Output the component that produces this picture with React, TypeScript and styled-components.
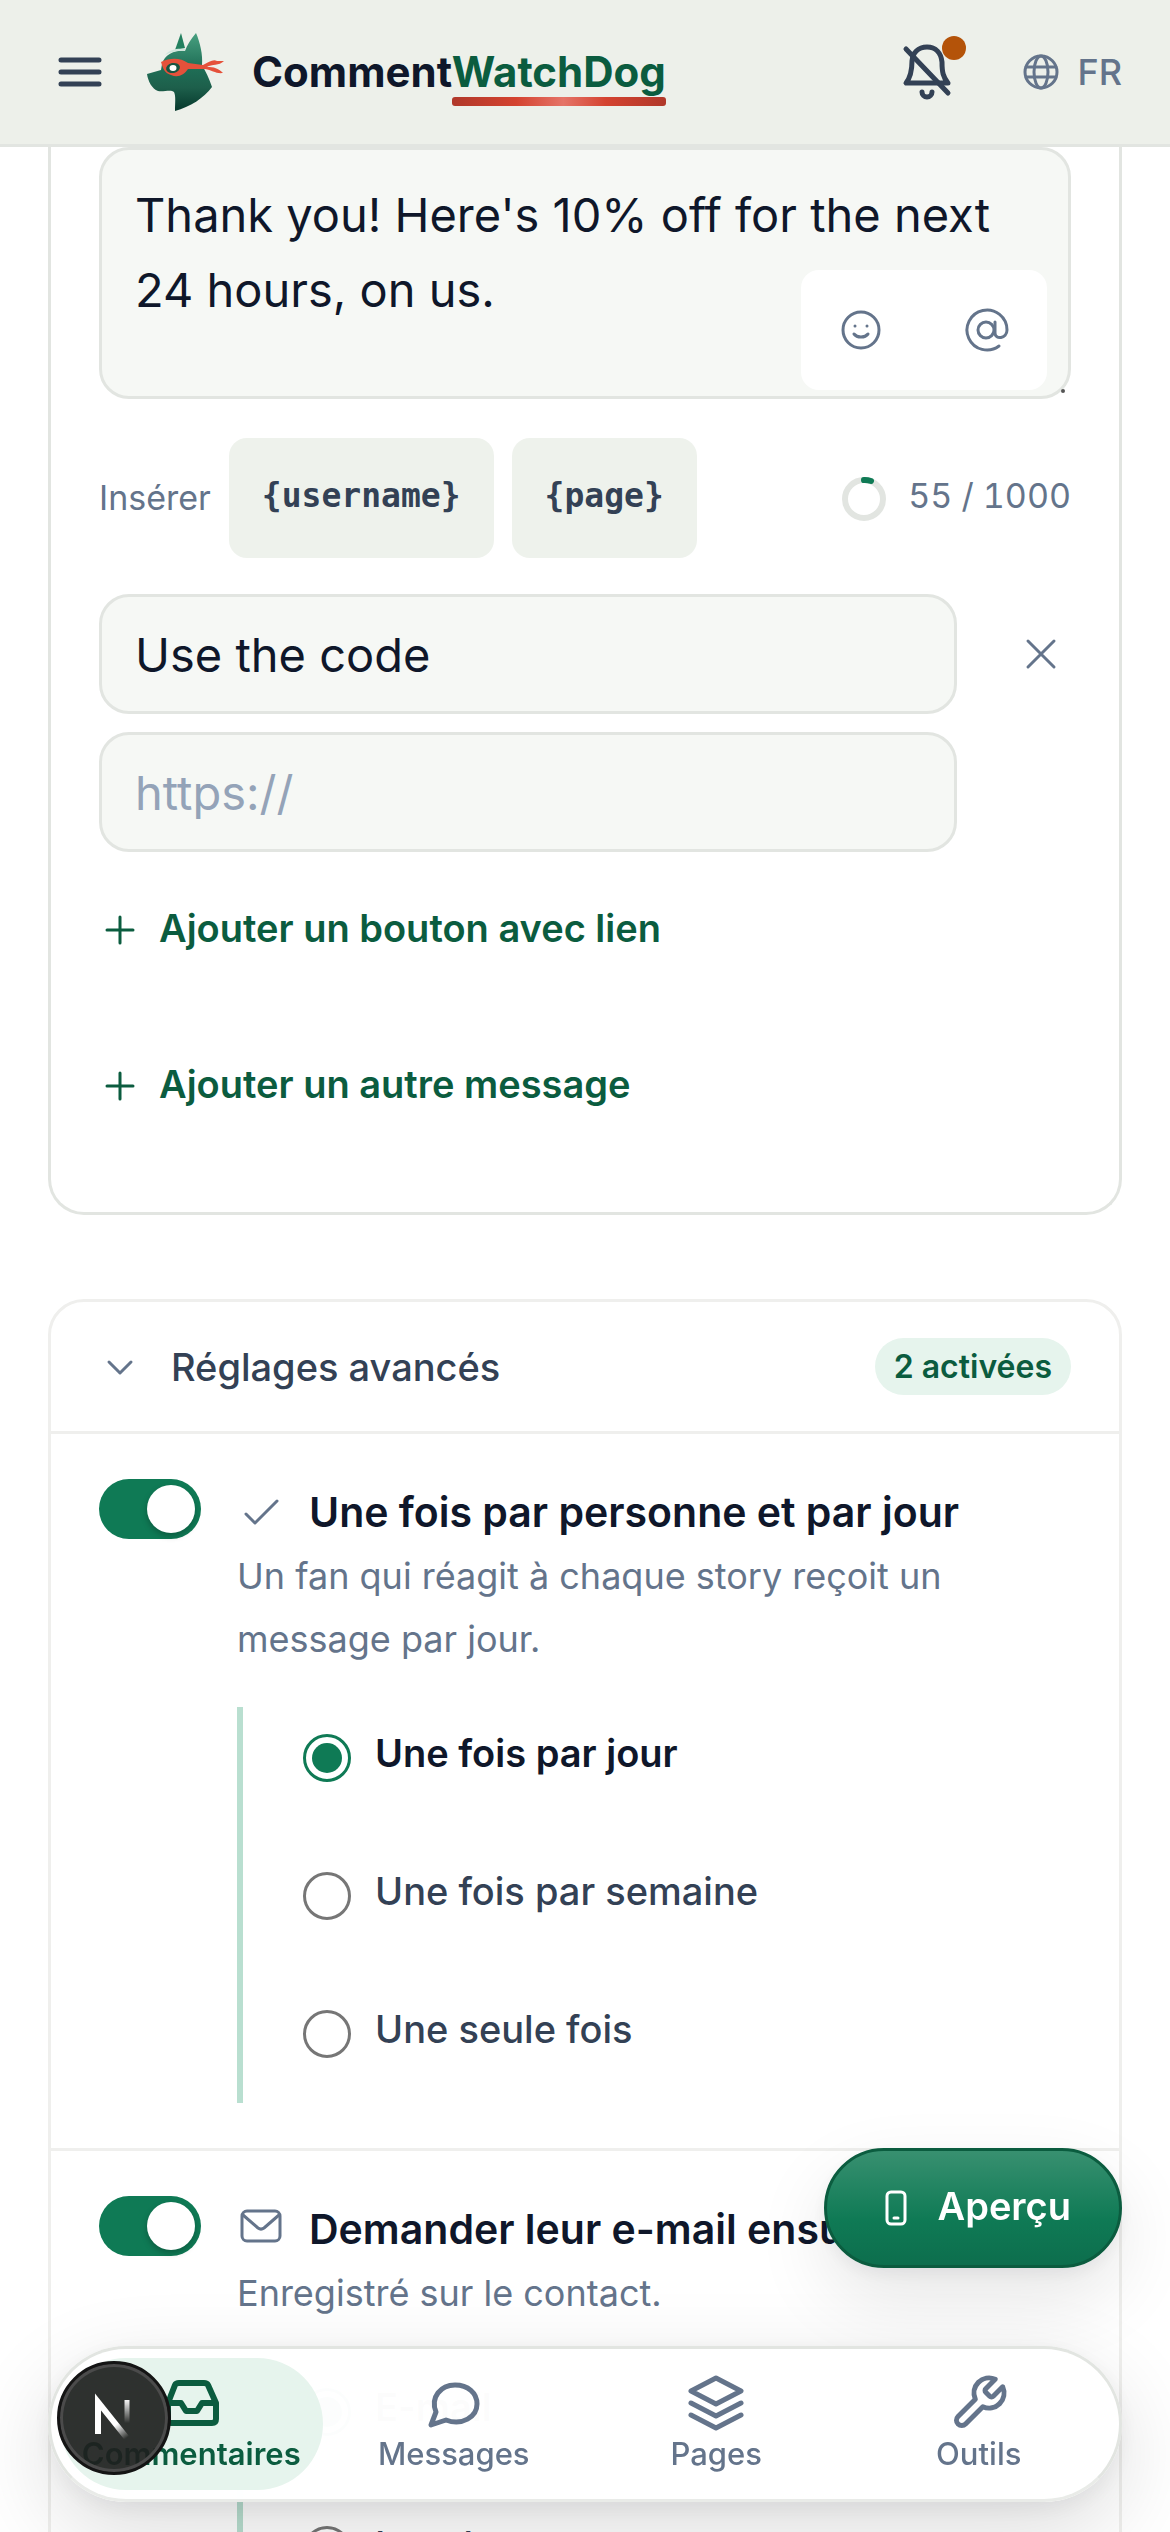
import React, { useState } from "react";
import styled, { createGlobalStyle } from "styled-components";

const c = {
  ink: "#0f172a",
  slate: "#334155",
  muted: "#64748b",
  faint: "#94a3b8",
  green: "#0f7a55",
  deep: "#0b5c3f",
  mint: "#e6f4ed",
  line: "#e2e5e1",
  soft: "#efefed",
  field: "#f6f8f5",
  chip: "#eef2ec",
  bar: "#edf0ea",
};

const Global = createGlobalStyle`
  *, *::before, *::after { box-sizing: border-box; }
  body { margin: 0; background: #fff; color: ${c.ink}; font-family: Inter, "Liberation Sans", sans-serif; }
  button, input, textarea { font: inherit; color: inherit; margin: 0; }
  button { border: 0; background: none; padding: 0; cursor: pointer; }
  svg { display: block; flex: none; }
`;

const Screen = styled.div`
  height: 100vh;
  display: flex;
  flex-direction: column;
  overflow: hidden;
`;

const Header = styled.header`
  flex: none;
  display: flex;
  align-items: center;
  height: 147px;
  padding: 0 48px 0 54px;
  background: ${c.bar};
  border-bottom: 3px solid ${c.line};
`;

const MenuButton = styled.button`
  color: ${c.slate};
`;

const Brand = styled.a`
  display: flex;
  align-items: center;
  gap: 27px;
  margin-left: 42px;
  color: ${c.ink};
  text-decoration: none;
  font-size: 42px;
  line-height: 60px;
  font-weight: 700;
`;

const Accent = styled.span`
  position: relative;
  color: ${c.deep};
  &::after {
    content: "";
    position: absolute;
    left: 0;
    right: 0;
    bottom: -9px;
    height: 9px;
    border-radius: 3px;
    background: linear-gradient(90deg, #b0382a, #d44330 30%, #e57468 52%, #d44330 72%, #b0382a);
  }
`;

const HeaderTools = styled.div`
  display: flex;
  align-items: center;
  gap: 69px;
  margin-left: auto;
`;

const BellButton = styled.button`
  position: relative;
  color: ${c.slate};
`;

const Dot = styled.span`
  position: absolute;
  top: -6px;
  right: -12px;
  width: 24px;
  height: 24px;
  border-radius: 50%;
  background: #b45309;
`;

const LangButton = styled.button`
  display: flex;
  align-items: center;
  gap: 18px;
  color: ${c.muted};
  font-size: 36px;
  line-height: 48px;
  font-weight: 500;
`;

const Main = styled.main`
  flex: 1;
  min-height: 0;
  overflow-y: auto;
  scrollbar-width: none;
  padding: 0 48px;
  display: flex;
  flex-direction: column;
  gap: 84px;
`;

const MessageCard = styled.section`
  flex: none;
  display: flex;
  flex-direction: column;
  padding: 0 48px 66px;
  border: 3px solid ${c.line};
  border-top: 0;
  border-radius: 0 0 36px 36px;
`;

const Composer = styled.div`
  position: relative;
  display: flex;
`;

const MessageBox = styled.textarea`
  flex: 1;
  min-width: 0;
  height: 252px;
  padding: 27px 33px;
  border: 3px solid ${c.line};
  border-radius: 30px;
  background: ${c.field};
  font-size: 47px;
  line-height: 75px;
  resize: none;
  outline: none;
  overflow: hidden;
`;

const ComposerTools = styled.div`
  position: absolute;
  right: 24px;
  bottom: 9px;
  display: flex;
  gap: 6px;
  border-radius: 18px;
  background: #fff;
`;

const ToolButton = styled.button`
  display: grid;
  place-items: center;
  width: 120px;
  height: 120px;
  color: ${c.muted};
`;

const Grip = styled.span`
  position: absolute;
  right: 6px;
  bottom: 6px;
  width: 4px;
  height: 4px;
  border-radius: 50%;
  background: #555;
`;

const InsertRow = styled.div`
  display: flex;
  align-items: center;
  gap: 18px;
  margin-top: 39px;
  color: ${c.muted};
  font-size: 34px;
  line-height: 48px;
`;

const TokenButton = styled.button`
  height: 120px;
  padding: 0 33px 4px;
  border-radius: 18px;
  background: ${c.chip};
  color: ${c.slate};
  font-family: "DejaVu Sans Mono", monospace;
  font-size: 33px;
  font-weight: 700;
`;

const Counter = styled.span`
  display: flex;
  align-items: center;
  gap: 21px;
  margin-left: auto;
  font-variant-numeric: tabular-nums;
`;

const Label = styled.span`
  padding-bottom: 4px;
`;

const LinkRow = styled.div`
  display: flex;
  align-items: flex-start;
  gap: 54px;
  margin-top: 36px;
`;

const Fields = styled.div`
  flex: 1;
  min-width: 0;
  display: flex;
  flex-direction: column;
  gap: 18px;
`;

const Field = styled.input`
  width: 100%;
  height: 120px;
  padding: 0 33px;
  border: 3px solid ${c.line};
  border-radius: 30px;
  background: ${c.field};
  font-size: 47px;
  outline: none;
  &::placeholder { color: ${c.faint}; opacity: 1; }
`;

const RemoveButton = styled.button`
  display: grid;
  place-items: center;
  width: 60px;
  height: 120px;
  color: ${c.muted};
`;

const AddButton = styled.button<{ $gap: number }>`
  align-self: flex-start;
  display: flex;
  align-items: center;
  gap: 18px;
  height: 120px;
  margin-top: ${(p) => p.$gap}px;
  color: ${c.deep};
  font-size: 38px;
  font-weight: 600;
`;

const SettingsCard = styled.section`
  flex: none;
  border: 3px solid ${c.soft};
  border-radius: 36px;
`;

const SettingsHead = styled.button`
  display: flex;
  align-items: center;
  width: 100%;
  height: 129px;
  padding: 0 48px;
  gap: 30px;
  color: ${c.slate};
  font-size: 38px;
  font-weight: 500;
  svg { color: ${c.muted}; }
`;

const Badge = styled.span`
  margin-left: auto;
  padding: 0 19px;
  border-radius: 30px;
  background: ${c.mint};
  color: ${c.deep};
  font-size: 32px;
  line-height: 57px;
  font-weight: 600;
`;

const Setting = styled.div`
  display: flex;
  align-items: flex-start;
  gap: 36px;
  padding: 45px 48px;
  border-top: 3px solid ${c.soft};
`;

const Switch = styled.input`
  appearance: none;
  flex: none;
  width: 102px;
  height: 60px;
  padding: 6px;
  border-radius: 30px;
  background: #cbd5e1;
  display: flex;
  cursor: pointer;
  &::before {
    content: "";
    width: 48px;
    height: 48px;
    border-radius: 50%;
    background: #fff;
    box-shadow: 0 3px 6px rgba(0, 0, 0, 0.25);
  }
  &:checked { background: ${c.green}; justify-content: flex-end; }
`;

const SettingBody = styled.div`
  flex: 1;
  min-width: 0;
`;

const SettingTitle = styled.label`
  display: flex;
  align-items: center;
  gap: 24px;
  font-size: 41px;
  line-height: 66px;
  font-weight: 600;
  white-space: nowrap;
  svg { color: ${c.muted}; }
`;

const SettingText = styled.p`
  margin: 0;
  color: ${c.muted};
  font-size: 36px;
  line-height: 63px;
`;

const Options = styled.fieldset`
  display: flex;
  flex-direction: column;
  gap: 18px;
  min-width: 0;
  margin: 36px 0 0;
  padding: 0 0 0 60px;
  border: 0;
  border-left: 6px solid #b9dfd0;
`;

const Option = styled.label`
  display: flex;
  align-items: flex-start;
  gap: 24px;
  height: 120px;
  padding-top: 18px;
  color: ${c.slate};
  font-size: 38px;
  line-height: 57px;
  font-weight: 500;
  &:has(input:checked) { color: ${c.ink}; font-weight: 600; }
`;

const Radio = styled.input`
  appearance: none;
  flex: none;
  display: grid;
  place-items: center;
  width: 48px;
  height: 48px;
  && { margin: 9px 0 0; }
  border: 3px solid #767676;
  border-radius: 50%;
  background: #fff;
  &:checked { border-color: ${c.green}; }
  &:checked::before {
    content: "";
    width: 30px;
    height: 30px;
    border-radius: 50%;
    background: ${c.green};
  }
`;

const PreviewButton = styled.button`
  position: fixed;
  right: 48px;
  bottom: 264px;
  display: flex;
  align-items: center;
  gap: 18px;
  height: 120px;
  padding: 0 48px 0 45px;
  border: 3px solid ${c.deep};
  border-radius: 60px;
  background: linear-gradient(180deg, #389070, #0f7a55 60%, #0d6e4d);
  color: #fff;
  font-size: 38px;
  font-weight: 600;
  box-shadow: 0 6px 18px rgba(15, 23, 42, 0.06), 0 30px 75px rgba(0, 0, 0, 0.1);
`;

const TabBar = styled.nav`
  position: fixed;
  left: 48px;
  right: 48px;
  bottom: 30px;
  display: grid;
  grid-template-columns: repeat(4, 1fr);
  padding: 9px;
  border: 3px solid ${c.line};
  border-bottom-color: #e9ebe8;
  border-radius: 78px;
  background: rgba(255, 255, 255, 0.99);
  box-shadow: 0 6px 24px rgba(15, 23, 42, 0.06), 0 30px 90px rgba(0, 0, 0, 0.14);
`;

const Tab = styled.a<{ $active?: boolean }>`
  display: flex;
  flex-direction: column;
  align-items: center;
  height: 132px;
  padding-top: 15px;
  border-radius: 66px;
  background: ${(p) => (p.$active ? c.mint : "transparent")};
  color: ${(p) => (p.$active ? c.deep : c.muted)};
  text-decoration: none;
  font-size: 31px;
  line-height: 42px;
  font-weight: ${(p) => (p.$active ? 600 : 500)};
`;

const DevBadge = styled.button`
  position: fixed;
  left: 57px;
  bottom: 57px;
  display: grid;
  place-items: center;
  width: 114px;
  height: 114px;
  && { border: 3px solid #141414; }
  border-radius: 50%;
  background: rgba(30, 31, 30, 0.92);
  box-shadow: inset 0 0 0 3px #4b4b4b;
`;

type P = { children: React.ReactNode; w: number; h?: number; s?: number; vb?: string };
const Icon = ({ children, w, h = w, s = 2, vb }: P) => (
  <svg width={w} height={h} viewBox={vb ?? `0 0 ${w} ${h}`} fill="none" stroke="currentColor"
    strokeWidth={s} strokeLinecap="round" strokeLinejoin="round" aria-hidden="true">
    {children}
  </svg>
);

const Logo = () => (
  <svg width="78" height="78" viewBox="0 0 78 78" aria-hidden="true">
    <defs>
      <linearGradient id="coat" x1="0" y1="0" x2="0" y2="1">
        <stop offset="0" stopColor="#48a080" />
        <stop offset="0.45" stopColor="#1f6e56" />
        <stop offset="0.7" stopColor="#1d5f4b" />
        <stop offset="1" stopColor="#06382c" />
      </linearGradient>
    </defs>
    <path d="M34 0 L28 17 L38 15 Z" fill="#23805f" />
    <path d="M49 0 C44 6 40 12 38 18 C28 17 18 21 15 31 L14 37 L0 41 C1 48 5 56 11 58 C17 59 24 56 27 59 C29 63 28 70 28 78 C43 74 57 65 65 54 C62 45 59 39 55 32 C56 22 53 9 49 0 Z" fill="url(#coat)" />
    <path d="M18 22 C23 16 31 15 38 16 L38 18 C31 17 24 19 18 22 Z" fill="#cfe6dc" />
    <path d="M14 29 C24 24 34 25 41 30 L56 32 C62 29 66 26 70 28 L77 28 C72 33 65 31 60 34 C67 34 71 35 76 40 C69 41 65 37 58 36 L41 36 C37 42 31 45 24 42 C17 40 16 35 14 29 Z" fill="#e5513b" />
    <ellipse cx="26" cy="35" rx="7" ry="5" fill="#165541" transform="rotate(-12 26 35)" />
    <ellipse cx="26" cy="35" rx="3.5" ry="3" fill="#fff" />
  </svg>
);

const Bell = () => (
  <Icon w={54} h={60} s={5}>
    <path d="M27 5 C18 5 12.500 11 12 19 C12 30 10 36 6 41 H48 C43 35 42 30 42 20 C41 11 36 5 27 5 Z" />
    <path d="M22 50 a5 5 0 0 0 10 0" />
    <path d="M6 7 L48 51" />
  </Icon>
);

const Globe = () => (
  <Icon w={36} s={3}>
    <circle cx="18" cy="18" r="16" />
    <ellipse cx="18" cy="18" rx="7" ry="16" />
    <path d="M3 13 H33 M3 23 H33" />
  </Icon>
);

const Check = () => <Icon w={48} s={3}><path d="M9 26 L18 35 L40 13" /></Icon>;
const Mail = () => (
  <Icon w={48} s={3}>
    <rect x="5" y="6" width="38" height="30" rx="5" />
    <path d="M6 10 L21 23 a5 5 0 0 0 6 0 L42 10" />
  </Icon>
);

const Plus = () => <Icon w={42} s={3}><path d="M21 8 V34 M8 21 H34" /></Icon>;

function App() {
  const [text, setText] = useState("Thank you! Here's 10% off for the next 24 hours, on us.");
  const [label, setLabel] = useState("Use the code");
  const [url, setUrl] = useState("");
  const [freq, setFreq] = useState("Une fois par jour");

  return (
    <Screen>
      <Global />
      <Header>
        <MenuButton aria-label="Menu">
          <Icon w={51} h={48} s={5}><path d="M7 12 H45 M7 24 H45 M7 36 H45" /></Icon>
        </MenuButton>
        <Brand href="#">
          <Logo />
          <span>Comment<Accent>WatchDog</Accent></span>
        </Brand>
        <HeaderTools>
          <BellButton aria-label="Notifications">
            <Bell />
            <Dot />
          </BellButton>
          <LangButton><Globe />FR</LangButton>
        </HeaderTools>
      </Header>

      <Main>
        <MessageCard>
          <Composer>
            <MessageBox aria-label="Message" value={text} onChange={(e) => setText(e.target.value)} />
            <ComposerTools>
              <ToolButton aria-label="Emoji">
                <Icon w={48} s={3}>
                  <circle cx="24" cy="24" r="18" />
                  <path d="M17 28 C20 32 28 32 31 28" />
                  <path d="M18 20 h0.010 M30 20 h0.010" />
                </Icon>
              </ToolButton>
              <ToolButton aria-label="Mention">
                <Icon w={48} s={3}>
                  <circle cx="23" cy="24" r="8" />
                  <path d="M32 16 V27 C32 34 44 33 44 24 A20 20 0 1 0 36 40" />
                </Icon>
              </ToolButton>
            </ComposerTools>
            <Grip />
          </Composer>

          <InsertRow>
            <span>Insérer</span>
            <TokenButton>{"{username}"}</TokenButton>
            <TokenButton>{"{page}"}</TokenButton>
            <Counter>
              <Icon w={45} s={6}>
                <circle cx="22" cy="23" r="19" stroke={c.line} />
                <path d="M22 4 a19 19 0 0 1 7 1" stroke={c.green} />
              </Icon>
              <Label>{text.length} / 1000</Label>
            </Counter>
          </InsertRow>

          <LinkRow>
            <Fields>
              <Field aria-label="Texte du bouton" value={label} onChange={(e) => setLabel(e.target.value)} />
              <Field aria-label="Lien" placeholder="https://" value={url} onChange={(e) => setUrl(e.target.value)} />
            </Fields>
            <RemoveButton aria-label="Supprimer">
              <Icon w={48} s={3}><path d="M11 11 L37 37 M37 11 L11 37" /></Icon>
            </RemoveButton>
          </LinkRow>

          <AddButton $gap={18}><Plus /><Label>Ajouter un bouton avec lien</Label></AddButton>
          <AddButton $gap={36}><Plus /><Label>Ajouter un autre message</Label></AddButton>
        </MessageCard>

        <SettingsCard>
          <SettingsHead>
            <Icon w={42} s={3}><path d="M10 16 L21 27 L32 16" /></Icon>
            Réglages avancés
            <Badge>2 activées</Badge>
          </SettingsHead>

          <Setting>
            <Switch type="checkbox" id="once" defaultChecked />
            <SettingBody>
              <SettingTitle htmlFor="once"><Check />Une fois par personne et par jour</SettingTitle>
              <SettingText>Un fan qui réagit à chaque story reçoit un message par jour.</SettingText>
              <Options aria-label="Fréquence">
                {["Une fois par jour", "Une fois par semaine", "Une seule fois"].map((o) => (
                  <Option key={o}>
                    <Radio type="radio" name="freq" checked={freq === o} onChange={() => setFreq(o)} />
                    {o}
                  </Option>
                ))}
              </Options>
            </SettingBody>
          </Setting>

          <Setting>
            <Switch type="checkbox" id="mail" defaultChecked />
            <SettingBody>
              <SettingTitle htmlFor="mail"><Mail />Demander leur e-mail ensuite</SettingTitle>
              <SettingText>Enregistré sur le contact.</SettingText>
              <Options aria-label="E-mail">
                <Option><Radio type="radio" name="mail" defaultChecked />E-mail</Option>
                <Option><Radio type="radio" name="mail" />Les deux</Option>
              </Options>
            </SettingBody>
          </Setting>
        </SettingsCard>
      </Main>

      <PreviewButton>
        <Icon w={48} s={3}>
          <rect x="15" y="8" width="18" height="32" rx="4" />
          <path d="M22 34 H26" />
        </Icon>
        <Label>Aperçu</Label>
      </PreviewButton>

      <TabBar>
        <Tab href="#" $active>
          <Icon w={60} s={6}>
            <path d="M7 30 L14 12 Q15 10 18 10 H43 Q46 10 47 12 L55 30 V46 Q55 50 51 50 H10 Q7 50 7 46 Z" />
            <path d="M7 30 H20 L25 38 H36 L41 30 H54" />
          </Icon>
          Commentaires
        </Tab>
        <Tab href="#">
          <Icon w={60} s={5}>
            <path d="M7 52 L12 39 C6 24 17 12 31 12 C44 12 53 20 53 31 C53 44 38 53 22 47 Z" />
          </Icon>
          Messages
        </Tab>
        <Tab href="#">
          <Icon w={60} s={5}>
            <path d="M30 5 L55 18 L30 31 L5 18 Z M5 30 L30 43 L55 30 M5 42 L30 55 L55 42" />
          </Icon>
          Pages
        </Tab>
        <Tab href="#">
          <Icon w={60} vb="0 0 24 24">
            <path d="M14.700 6.300a1 1 0 0 0 0 1.400l1.600 1.600a1 1 0 0 0 1.400 0l3.770-3.770a6 6 0 0 1-7.940 7.940l-6.910 6.910a2.120 2.120 0 0 1-3-3l6.910-6.910a6 6 0 0 1 7.940-7.940l-3.760 3.760z" />
          </Icon>
          Outils
        </Tab>
      </TabBar>

      <DevBadge aria-label="Next.js">
        <svg width="48" height="54" viewBox="0 0 48 54" fill="none" aria-hidden="true">
          <defs>
            <linearGradient id="slant" x1="24" y1="26" x2="38" y2="46" gradientUnits="userSpaceOnUse">
              <stop offset="0.3" stopColor="#fff" /><stop offset="1" stopColor="#fff" stopOpacity="0" />
            </linearGradient>
            <linearGradient id="stem" x1="0" y1="8" x2="0" y2="32" gradientUnits="userSpaceOnUse">
              <stop offset="0" stopColor="#fff" /><stop offset="1" stopColor="#fff" stopOpacity="0" />
            </linearGradient>
          </defs>
          <path d="M8 43 V11 L40 51" stroke="url(#slant)" strokeWidth="6" />
          <path d="M37 9 V33" stroke="url(#stem)" strokeWidth="5" />
        </svg>
      </DevBadge>
    </Screen>
  );
}

export default App;
